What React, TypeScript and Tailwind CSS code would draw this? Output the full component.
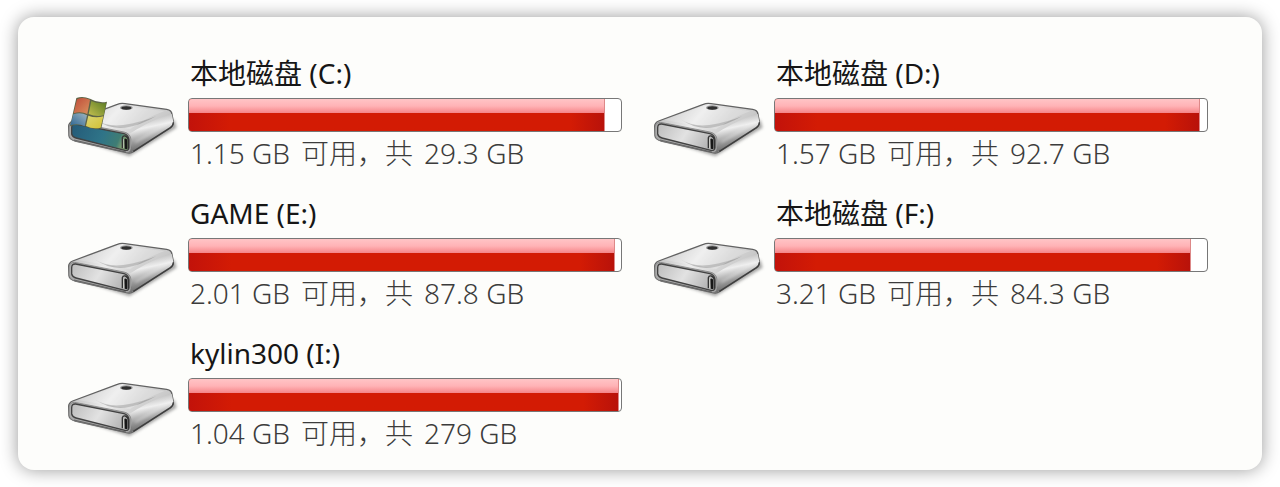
import React from "react";

type Disk = {
  id: string;
  name: string;
  free: string;
  total: string;
  used: number;
  system?: boolean;
};

const disks: Disk[] = [
  { id: "c", name: "本地磁盘 (C:)", free: "1.15 GB", total: "29.3 GB", used: 96.3, system: true },
  { id: "d", name: "本地磁盘 (D:)", free: "1.57 GB", total: "92.7 GB", used: 98.3 },
  { id: "e", name: "GAME (E:)", free: "2.01 GB", total: "87.8 GB", used: 98.6 },
  { id: "f", name: "本地磁盘 (F:)", free: "3.21 GB", total: "84.3 GB", used: 96.3 },
  { id: "i", name: "kylin300 (I:)", free: "1.04 GB", total: "279 GB", used: 99.6 },
];

function DriveIcon({ id, system }: { id: string; system?: boolean }) {
  const g = (name: string) => `${id}-${name}`;
  const ref = (name: string) => `url(#${id}-${name})`;
  return (
    <svg viewBox="54 22 324 192" className="mt-10 h-16 w-27 shrink-0 overflow-visible" aria-hidden="true">
      <defs>
        <linearGradient id={g("top")} x1="0" y1="0.3" x2="1" y2="0.7">
          <stop offset="0" stopColor="#bdbdbd" />
          <stop offset="0.35" stopColor="#ececec" />
          <stop offset="0.6" stopColor="#d4d4d4" />
          <stop offset="1" stopColor="#bcbcbc" />
        </linearGradient>
        <linearGradient id={g("side")} x1="0.35" y1="0" x2="0.6" y2="1">
          <stop offset="0" stopColor="#a9a9a9" />
          <stop offset="0.35" stopColor="#efefef" />
          <stop offset="0.65" stopColor="#9a9a9a" />
          <stop offset="1" stopColor="#555" />
        </linearGradient>
        <linearGradient id={g("face")} x1="0" y1="0" x2="1" y2="0.3">
          <stop offset="0" stopColor="#bcbcbc" />
          <stop offset="0.55" stopColor="#e2e2e2" />
          <stop offset="1" stopColor="#b8b8b8" />
        </linearGradient>
        <linearGradient id={g("teal")} x1="0" y1="0" x2="1" y2="0.2">
          <stop offset="0" stopColor="#245a78" />
          <stop offset="0.6" stopColor="#2f7488" />
          <stop offset="0.9" stopColor="#3f7d74" />
          <stop offset="1" stopColor="#7d9d72" />
        </linearGradient>
        <linearGradient id={g("red")} x1="0" y1="0" x2="1" y2="1">
          <stop offset="0" stopColor="#bf4a38" />
          <stop offset="1" stopColor="#d9925f" />
        </linearGradient>
        <linearGradient id={g("green")} x1="0" y1="1" x2="1" y2="0">
          <stop offset="0" stopColor="#c3bf50" />
          <stop offset="1" stopColor="#587a22" />
        </linearGradient>
        <linearGradient id={g("blue")} x1="0" y1="1" x2="1" y2="0">
          <stop offset="0" stopColor="#2b6593" />
          <stop offset="1" stopColor="#9db4c0" />
        </linearGradient>
        <linearGradient id={g("yellow")} x1="0" y1="0" x2="1" y2="1">
          <stop offset="0" stopColor="#dcd774" />
          <stop offset="1" stopColor="#d2c034" />
        </linearGradient>
        <filter id={g("soft")} x="-20%" y="-20%" width="140%" height="140%">
          <feGaussianBlur stdDeviation="5" />
        </filter>
      </defs>
      <path d="M62 144 L238 200 L380 114 L374 92 L70 120Z" fill="#555" opacity="0.5" filter={ref("soft")} />
      <path
        d="M56 110 Q56 99 68 94 L202 44 Q212 40 225 42 L350 59 Q365 61 366 74 L370 96 Q371 108 362 114 L250 186 Q242 192 230 189 L76 154 Q58 149 57 138Z"
        fill={ref("top")}
        stroke="#626262"
        strokeWidth="4"
      />
      <path
        d="M238 133 Q290 99 350 76 Q364 69 366 75 L370 97 Q370 108 361 114 L250 185 Q242 190 235 187 Q247 176 244 148 Q243 137 232 132Z"
        fill={ref("side")}
      />
      <path d="M250 185 L361 114 Q370 108 370 98" fill="none" stroke="#3e3e3e" strokeWidth="4" />
      <path d="M256 158 L358 98" fill="none" stroke="#f5f5f5" strokeWidth="5" opacity="0.5" filter={ref("soft")} />
      <path
        d="M134 89 Q168 112 220 106 Q274 98 318 80 Q270 108 226 114 Q176 119 134 89Z"
        fill="#8d8d8d"
        opacity="0.55"
      />
      <path d="M82 91 L206 48 L344 64 Q288 84 240 119 L106 95Z" fill="#fff" opacity="0.2" />
      <path
        d="M57 112 Q58 98 74 98 L222 127 Q241 131 243 149 V176 Q242 190 228 188 L76 154 Q58 149 57 136Z"
        fill="#aaa"
        stroke="#777"
        strokeWidth="2"
      />
      <path
        d="M65 115 Q65 102 77 103 L222 132 Q236 136 237 151 V174 Q236 184 225 182 L78 145 Q67 142 65 133Z"
        fill={system ? ref("teal") : ref("face")}
        stroke="#424242"
        strokeWidth="4"
      />
      <path d="M72 151 L228 187" fill="none" stroke="#494949" strokeWidth="2" />
      <path d="M217 176 V144 Q219 137 226 139 Q235 142 235 153 V177" fill="none" stroke="#333" strokeWidth="4" />
      <path d="M223 148 Q230 144 232 153 V179 L224 177Z" fill="#161616" />
      <path d="M221 175 V148" fill="none" stroke="#dadad0" strokeWidth="2" />
      <ellipse cx="229" cy="54" rx="19" ry="7" fill="#999" />
      <ellipse cx="229" cy="55" rx="15" ry="5" fill="#303030" />
      {system && (
        <g>
          <path d="M79 25 Q98 18 120 27 Q146 42 171 36 L154 116 Q132 124 104 109 Q82 102 60 110Z" fill="#5d6446" />
          <path d="M81 29 Q99 20 120 30 L112 73 Q92 63 71 71Z" fill={ref("red")} />
          <path d="M124 34 Q146 44 169 39 L161 77 Q138 82 116 73Z" fill={ref("green")} />
          <path d="M70 74 Q93 67 111 77 L104 110 Q84 99 61 107Z" fill={ref("blue")} />
          <path d="M115 78 Q137 87 160 80 L152 114 Q129 120 108 109Z" fill={ref("yellow")} />
        </g>
      )}
    </svg>
  );
}

function CapacityBar({ label, used }: { label: string; used: number }) {
  return (
    <div
      role="meter"
      aria-label={label}
      aria-valuemin={0}
      aria-valuemax={100}
      aria-valuenow={used}
      className="mt-2.25 h-8.5 overflow-hidden rounded-sm border border-[#777] bg-white"
    >
      <div
        className="flex h-full flex-col border-r border-[#d88] bg-[#d31b05]"
        style={{ width: `${used}%` }}
      >
        <div className="h-3.5 bg-linear-to-b from-[#ffc4c6] via-[#ffb3b6] to-[#f48488]" />
        <div className="flex-1 bg-linear-to-r from-[#c2120a] via-[#d31b04] via-10% to-[#d31b04]">
          <div className="h-full bg-linear-to-r from-transparent from-92% to-[#b8120a]" />
        </div>
      </div>
    </div>
  );
}

function DiskItem({ disk }: { disk: Disk }) {
  return (
    <li className="flex items-start gap-3">
      <DriveIcon id={disk.id} system={disk.system} />
      <div className="min-w-0 flex-1">
        <h2 className="pl-0.5 text-[28px] leading-8 whitespace-nowrap text-[#161616]">{disk.name}</h2>
        <CapacityBar label={disk.name} used={disk.used} />
        <p className="mt-1.25 flex gap-2.75 pl-0.5 text-[28px] leading-8 font-light whitespace-nowrap text-[#3c3c3c]">
          <span>{disk.free}</span>
          <span>可用，共</span>
          <span>{disk.total}</span>
        </p>
      </div>
    </li>
  );
}

export default function App() {
  return (
    <div className="bg-white px-4.5 py-4.25 font-['Noto_Sans','Noto_Sans_CJK_SC',sans-serif]">
      <main className="rounded-2xl bg-[#fdfdfb] pt-10 pr-13.5 pb-5.25 pl-12.5 shadow-[0_0_18px_rgba(0,0,0,0.4)]">
        <ul className="grid grid-cols-2 gap-x-8 gap-y-7">
          {disks.map((disk) => (
            <DiskItem key={disk.id} disk={disk} />
          ))}
        </ul>
      </main>
    </div>
  );
}
